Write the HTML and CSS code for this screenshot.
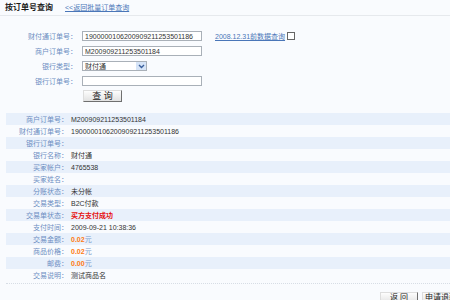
FILE: index.html
```html
<!DOCTYPE html>
<html lang="zh-CN">
<head>
    <meta charset="UTF-8">
    <title>按订单号查询</title>
    <link rel="stylesheet" href="styles.css">
</head>
<body>
    <div class="top-bar">
        <span class="page-title">按订单号查询</span>
        <a href="#" class="back-link">&lt;&lt;返回批量订单查询</a>
    </div>

    <div class="query-form">
        <div class="form-row">
            <label>财付通订单号：</label>
            <input type="text" class="text-input" value="1900000106200909211253501186">
            <a href="#" class="old-link">2008.12.31前数据查询</a>
            <span class="check-box"></span>
        </div>
        <div class="form-row">
            <label>商户订单号：</label>
            <input type="text" class="text-input" value="M200909211253501184">
        </div>
        <div class="form-row">
            <label>银行类型：</label>
            <div class="fake-select">
                <span>财付通</span>
                <span class="select-arrow">
                    <svg width="7" height="5" viewBox="0 0 7 5"><path d="M1 1 L3.5 3.5 L6 1" fill="none" stroke="#3a5f9c" stroke-width="1.4"/></svg>
                </span>
            </div>
        </div>
        <div class="form-row">
            <label>银行订单号：</label>
            <input type="text" class="text-input" value="">
        </div>
        <div class="form-row button-row">
            <button class="grey-button query-button">查 询</button>
        </div>
    </div>

    <div class="result-table">
        <div class="result-row"><span class="cell-label">商户订单号：</span><span class="cell-value">M200909211253501184</span></div>
        <div class="result-row"><span class="cell-label">财付通订单号：</span><span class="cell-value">1900000106200909211253501186</span></div>
        <div class="result-row"><span class="cell-label">银行订单号：</span><span class="cell-value"></span></div>
        <div class="result-row"><span class="cell-label">银行名称：</span><span class="cell-value">财付通</span></div>
        <div class="result-row"><span class="cell-label">买家帐户：</span><span class="cell-value">4765538</span></div>
        <div class="result-row"><span class="cell-label">买家姓名：</span><span class="cell-value"></span></div>
        <div class="result-row"><span class="cell-label">分账状态：</span><span class="cell-value">未分帐</span></div>
        <div class="result-row"><span class="cell-label">交易类型：</span><span class="cell-value">B2C付款</span></div>
        <div class="result-row"><span class="cell-label">交易单状态：</span><span class="cell-value status-ok">买方支付成功</span></div>
        <div class="result-row"><span class="cell-label">支付时间：</span><span class="cell-value">2009-09-21 10:38:36</span></div>
        <div class="result-row"><span class="cell-label">交易金额：</span><span class="cell-value"><b class="money">0.02</b><span class="unit">元</span></span></div>
        <div class="result-row"><span class="cell-label">商品价格：</span><span class="cell-value"><b class="money">0.02</b><span class="unit">元</span></span></div>
        <div class="result-row"><span class="cell-label">邮费：</span><span class="cell-value"><b class="money">0.00</b><span class="unit">元</span></span></div>
        <div class="result-row"><span class="cell-label">交易说明：</span><span class="cell-value">测试商品名</span></div>
    </div>

    <div class="bottom-buttons">
        <button class="grey-button">返 回</button>
        <button class="grey-button">申请退款</button>
    </div>
</body>
</html>
```

FILE: styles.css
```css
body {
    margin: 0;
    background-color: #f9fbfe;
    font-family: 'Liberation Sans', 'Noto Sans CJK SC', sans-serif;
    font-size: 7px;
    color: #333;
    overflow: hidden;
}

.top-bar {
    height: 15px;
    line-height: 15px;
    padding-left: 5px;
    border-bottom: 1px solid #e6e9ed;
    display: flex;
    align-items: center;
}

.page-title {
    font-size: 8px;
    font-weight: bold;
    color: #1a1a1a;
    width: 60px;
}

.back-link {
    color: #4a76b8;
    text-decoration: underline;
}

.query-form {
    padding-top: 15px;
    display: flex;
    flex-direction: column;
    gap: 5px;
}

.form-row {
    display: flex;
    align-items: center;
    height: 10px;
}

.form-row label {
    width: 77px;
    text-align: right;
    color: #6c8ec2;
    margin-right: 5px;
}

.text-input {
    box-sizing: border-box;
    width: 120px;
    height: 10px;
    padding: 0 2px;
    border: 1px solid #a9b0b8;
    background: #fff;
    font-family: 'Liberation Sans', sans-serif;
    font-size: 7px;
    color: #333;
    outline: none;
}

.old-link {
    margin-left: 13px;
    color: #4a76b8;
    text-decoration: underline;
}

.check-box {
    width: 6px;
    height: 6px;
    border: 1px solid #666;
    background: #fff;
    margin-left: 2px;
}

.fake-select {
    box-sizing: border-box;
    width: 65px;
    height: 10px;
    border: 1px solid #a9b0b8;
    background: #fff;
    display: flex;
    align-items: center;
    justify-content: space-between;
    padding-left: 2px;
}

.select-arrow {
    width: 10px;
    height: 8px;
    background: #d6e4f7;
    display: flex;
    align-items: center;
    justify-content: center;
}

.button-row {
    height: 12px;
    margin-top: -1px;
}

.grey-button {
    box-sizing: border-box;
    height: 12px;
    padding: 0;
    border: 1px solid #6f6f6f;
    border-top-color: #ddd;
    border-left-color: #ddd;
    background: linear-gradient(#fdfdfd, #e2e2e2);
    font-family: 'Liberation Sans', 'Noto Sans CJK SC', sans-serif;
    font-size: 8px;
    color: #222;
    line-height: 10px;
}

.query-button {
    width: 39px;
    margin-left: 83px;
    font-size: 9px;
}

.result-table {
    margin: 11px 0 0 6px;
    padding-bottom: 2px;
    border-bottom: 1px dotted #d7dde5;
}

.result-row {
    height: 12px;
    display: flex;
    align-items: center;
}

.result-row:nth-child(odd) {
    background-color: #e8f0fb;
}

.cell-label {
    width: 62px;
    text-align: right;
    color: #6c8ec2;
}

.cell-value {
    padding-left: 3px;
    color: #333;
}

.status-ok {
    color: #e60f0f;
    font-weight: bold;
}

.money {
    color: #ff7a12;
}

.unit {
    color: #7c9ccc;
}

.bottom-buttons {
    display: flex;
    gap: 4px;
    margin: 8px 0 0 380px;
}

.bottom-buttons .grey-button {
    width: 38px;
    flex-shrink: 0;
}
```
